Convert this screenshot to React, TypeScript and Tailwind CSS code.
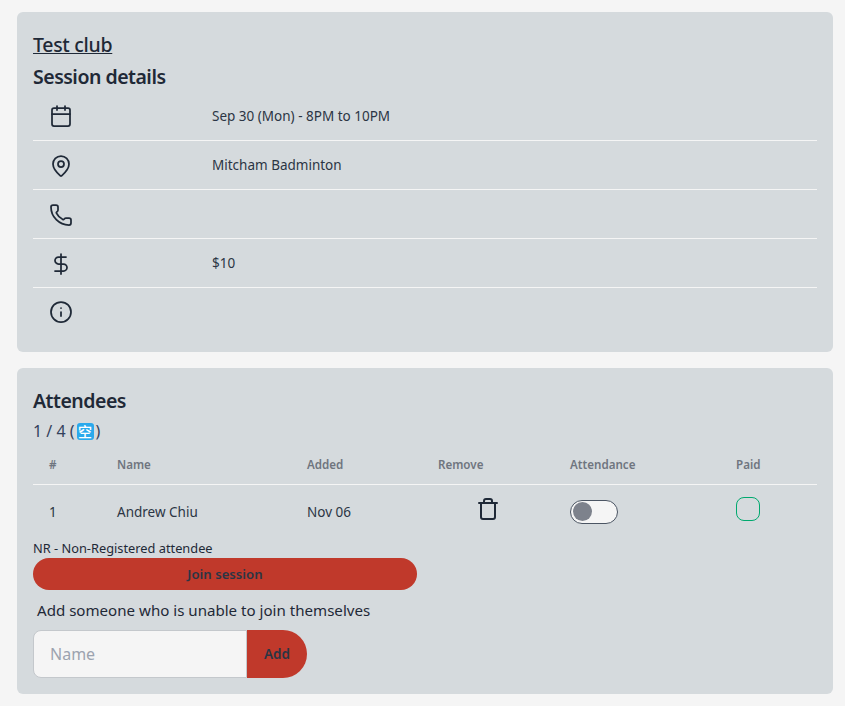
import React from 'react';
import { Calendar, MapPin, Phone, DollarSign, Info, Trash } from 'lucide-react';

const iconProps = { size: 28, strokeWidth: 1.75 };

const details = [
  { icon: <Calendar {...iconProps} />, text: 'Sep 30 (Mon) - 8PM to 10PM' },
  { icon: <MapPin {...iconProps} />, text: 'Mitcham Badminton' },
  { icon: <Phone {...iconProps} />, text: '' },
  { icon: <DollarSign {...iconProps} />, text: '$10' },
  { icon: <Info {...iconProps} />, text: '' },
];

export default function App() {
  return (
    <div className="min-h-[706px] bg-[#f5f5f5] pl-[17px] pr-[12px] pt-3 text-[#1f2937] font-['Noto_Sans','Open_Sans',sans-serif]">
      {/* Session card */}
      <div className="h-[340px] rounded-md bg-[#d5dadd] px-4 pt-4">
        <a className="block text-[19.5px] leading-[34px] font-medium tracking-[-0.3px] underline">Test club</a>
        <h2 className="text-[19.5px] leading-[30px] font-semibold tracking-[-0.5px]">Session details</h2>
        <table className="w-full table-fixed -mt-[1px] text-[13.5px] text-[#2b3544]">
          <colgroup>
            <col className="w-[163px]" />
            <col />
          </colgroup>
          <tbody>
            {details.map((row, index) => (
              <tr key={index} className={index < 4 ? 'h-[49px] border-b border-[#f5f5f5]' : 'h-[48px]'}>
                <td className="px-4 pt-[2px] align-middle text-[#1f2937]">
                  <span className="flex w-6 justify-center">{row.icon}</span>
                </td>
                <td className="px-4 pt-[2px] align-middle">{row.text}</td>
              </tr>
            ))}
          </tbody>
        </table>
      </div>

      {/* Attendees card */}
      <div className="mt-4 h-[326px] rounded-md bg-[#d5dadd] px-4 pt-4">
        <h2 className="text-[19.5px] leading-[34px] font-semibold tracking-[-0.5px]">Attendees</h2>
        <div className="flex items-center pt-[1px] text-base leading-6 text-[#33415c]">
          <span>1 / 4 (</span>
          <span className="ml-[2px] flex h-[17px] w-[17px] items-center justify-center rounded-[3px] bg-[#2aa9ec] text-[14px] leading-none font-medium text-white font-['Noto_Sans_CJK_SC',sans-serif]">空</span>
          <span className="ml-[2px]">)</span>
        </div>
        <table className="mt-[2px] w-full table-fixed text-[13.5px] text-[#2b3544]">
          <colgroup>
            <col className="w-[68px]" />
            <col className="w-[190px]" />
            <col className="w-[131px]" />
            <col className="w-[132px]" />
            <col className="w-[166px]" />
            <col />
          </colgroup>
          <thead>
            <tr className="h-[39px] border-b border-[#f5f5f5] text-left text-[11.6px] text-[#6f757f]">
              <th className="px-4 font-semibold">#</th>
              <th className="px-4 font-semibold">Name</th>
              <th className="px-4 font-semibold">Added</th>
              <th className="px-4 font-semibold">Remove</th>
              <th className="px-4 font-semibold">Attendance</th>
              <th className="px-4 font-semibold">Paid</th>
            </tr>
          </thead>
          <tbody>
            <tr className="h-[55px]">
              <td className="px-4">1</td>
              <td className="px-4">Andrew Chiu</td>
              <td className="px-4">Nov 06</td>
              <td className="px-4 text-[#1f2937]">
                <span className="ml-[38px] -mt-[6px] flex w-6 justify-center"><Trash size={24} strokeWidth={2} /></span>
              </td>
              <td className="px-4">
                <span className="flex h-6 w-12 items-center rounded-full border border-[#4b5563] bg-[#f5f5f5] pl-[2px]">
                  <span className="h-[19px] w-[19px] rounded-full bg-[#7d828c]" />
                </span>
              </td>
              <td className="px-4">
                <span className="-mt-[6px] block h-6 w-6 rounded-lg border border-[#00a96e]" />
              </td>
            </tr>
          </tbody>
        </table>
        <p className="text-[12.8px] leading-[19px]">NR - Non-Registered attendee</p>
        <button className="block h-8 w-[384px] rounded-full bg-[#c0392b] pt-[1px] text-[13.2px] font-semibold text-[#2b3544]">Join session</button>
        <p className="mt-[8px] pl-1 text-[15.1px] leading-6">Add someone who is unable to join themselves</p>
        <div className="mt-[8px] flex">
          <input placeholder="Name" className="h-12 w-[214px] rounded-l-lg border border-[#c4c8cc] bg-[#f5f5f5] px-4 text-base outline-none placeholder:text-[#9ca3af]" />
          <button className="h-12 w-[60px] rounded-r-[24px] bg-[#c0392b] text-[13.5px] font-semibold text-[#2b3544]">Add</button>
        </div>
      </div>
    </div>
  );
}
